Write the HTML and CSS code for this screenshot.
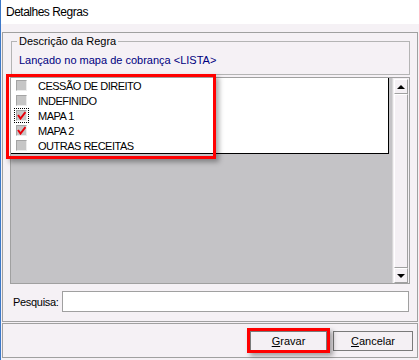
FILE: index.html
```html
<!DOCTYPE html>
<html lang="pt">
  <head>
    <meta charset="utf-8" />
    <title>Detalhes Regras</title>
    <link rel="stylesheet" href="styles.css">
  </head>
  <body>
    <div class="titlebar">Detalhes Regras</div>

    <div class="panel main">
      <fieldset class="group">
        <legend>Descrição da Regra</legend>
        <div class="desc">Lançado no mapa de cobrança &lt;LISTA&gt;</div>
      </fieldset>

      <div class="gridbox">
        <div class="list">
          <div class="row"><span class="check"></span>CESSÃO DE DIREITO</div>
          <div class="row"><span class="check"></span>INDEFINIDO</div>
          <div class="row">
            <span class="check on focus">
              <svg width="9" height="9" viewBox="0 0 9 9"><path d="M1 4 L3.5 7.5 L8.5 1" fill="none" stroke="#e8000b" stroke-width="2"/></svg>
            </span>MAPA 1
          </div>
          <div class="row">
            <span class="check on">
              <svg width="9" height="9" viewBox="0 0 9 9"><path d="M1 4 L3.5 7.5 L8.5 1" fill="none" stroke="#e8000b" stroke-width="2"/></svg>
            </span>MAPA 2
          </div>
          <div class="row"><span class="check"></span>OUTRAS RECEITAS</div>
        </div>

        <div class="scrollbar">
          <div class="sbtn"><span class="arrow up"></span></div>
          <div class="thumb"></div>
          <div class="sbtn"><span class="arrow down"></span></div>
        </div>

        <!-- destaque vermelho -->
        <div class="mark list-mark"></div>
      </div>

      <div class="search">
        <label for="pesquisa">Pesquisa:</label>
        <input id="pesquisa" type="text" />
      </div>
    </div>

    <div class="panel footer">
      <div class="btn-wrap">
        <button class="btn"><u>G</u>ravar</button>
        <div class="mark btn-mark"></div>
      </div>
      <button class="btn"><u>C</u>ancelar</button>
    </div>
  </body>
</html>
```

FILE: styles.css
```css
body {
  margin: 0;
  width: 418px;
  height: 360px;
  background-color: #f5f1f5;
  border-left: 1px solid #3c78c8;
  font-family: "Liberation Sans", Arial, sans-serif;
  font-size: 11px;
  color: #000;
  overflow: hidden;
}

.titlebar {
  height: 24px;
  line-height: 24px;
  background-color: #ffffff;
  padding-left: 5px;
  font-size: 12px;
  letter-spacing: -0.5px;
}

.panel {
  box-sizing: border-box;
  width: 416px;
  margin-left: 1px;
  border: 1px solid #a0a0a0;
}

.main {
  height: 290px;
  margin-top: 8px;
}

.group {
  margin: 2px 7px 0 8px;
  padding: 0 5px 7px 5px;
  border: 1px solid #b4b4b4;
}

.group legend {
  padding: 0 2px;
  line-height: 13px;
}

.desc {
  color: #000080;
  padding: 6px 0 0 2px;
  line-height: 13px;
}

.gridbox {
  position: relative;
  display: flex;
  box-sizing: border-box;
  width: 400px;
  height: 207px;
  margin: 2px 0 0 7px;
  background-color: #c4c3c6;
  border: 1px solid #a0a0a0;
}

.list {
  box-sizing: border-box;
  width: 378px;
  height: 76px;
  background-color: #ffffff;
  border-right: 1px solid #000;
  border-bottom: 1px solid #000;
}

.row {
  display: flex;
  align-items: center;
  height: 15px;
  padding-left: 5px;
  white-space: nowrap;
  letter-spacing: -0.5px;
}

.check {
  box-sizing: border-box;
  display: flex;
  align-items: center;
  justify-content: center;
  width: 11px;
  height: 11px;
  margin-right: 11px;
  background-color: #c6c6c6;
  border: 1px solid;
  border-color: #a4a4a4 #ececec #ececec #a4a4a4;
}

.check.focus {
  outline: 1px dotted #000;
  outline-offset: 1px;
}

.scrollbar {
  display: flex;
  flex-direction: column;
  box-sizing: border-box;
  width: 17px;
  margin-left: 3px;
  padding: 1px 1px 0 1px;
  background-color: #f4f0f4;
  border-left: 1px solid #d8d8d8;
}

.sbtn {
  box-sizing: border-box;
  display: flex;
  align-items: center;
  justify-content: center;
  height: 15px;
  background-color: #f4f0f4;
  border: 1px solid;
  border-color: #ffffff #a0a0a0 #a0a0a0 #ffffff;
}

.thumb {
  flex: 1;
  background-color: #f4f0f4;
  border: 1px solid;
  border-color: #ffffff #a0a0a0 #a0a0a0 #ffffff;
}

.arrow {
  width: 0;
  height: 0;
  border-left: 4px solid transparent;
  border-right: 4px solid transparent;
}

.arrow.up {
  border-bottom: 4px solid #000;
}

.arrow.down {
  border-top: 4px solid #000;
}

.mark {
  position: absolute;
  box-sizing: border-box;
  border: 3px solid #f00;
  box-shadow: 3px 3px 5px rgba(0, 0, 0, 0.35);
}

.list-mark {
  left: -5px;
  top: -4px;
  width: 210px;
  height: 85px;
}

.search {
  display: flex;
  align-items: center;
  margin-top: 7px;
  padding-left: 10px;
}

.search label {
  width: 49px;
  letter-spacing: -0.3px;
}

.search input {
  box-sizing: border-box;
  width: 347px;
  height: 21px;
  margin: 0;
  border: 1px solid #a0a0a0;
  background-color: #ffffff;
}

.footer {
  display: flex;
  justify-content: flex-end;
  gap: 6px;
  height: 35px;
  margin-top: 1px;
  padding: 7px 4px 0 0;
}

.btn-wrap {
  position: relative;
}

.btn {
  box-sizing: border-box;
  width: 80px;
  height: 20px;
  padding: 0;
  font-family: "Liberation Sans", Arial, sans-serif;
  font-size: 11px;
  color: #000;
  background-color: #f4f0f4;
  border: 1px solid #7a7a7a;
}

.btn-wrap .btn {
  width: 77px;
}

.btn-mark {
  left: -3px;
  top: -3px;
  width: 83px;
  height: 25px;
}
```
